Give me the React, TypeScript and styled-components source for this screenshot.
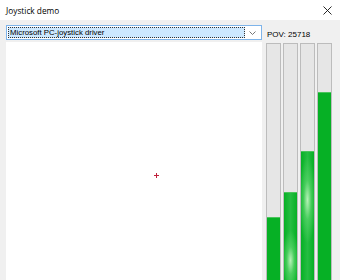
import React from "react";
import styled, { createGlobalStyle } from "styled-components";

const Global = createGlobalStyle`
  html, body { margin: 0; padding: 0; background: #f0f0f0; overflow: hidden; }
  body { font-family: "Liberation Sans", Arial, sans-serif; }
`;

const Window = styled.div`
  width: 340px;
  height: 280px;
  display: flex;
  flex-direction: column;
  background: #f0f0f0;
  overflow: hidden;
`;

const TitleBar = styled.div`
  height: 20px;
  flex: none;
  background: #ffffff;
  display: flex;
  align-items: center;
  justify-content: space-between;
  padding: 0 6px 0 6px;
  font-family: "Open Sans", "Liberation Sans", sans-serif;
  font-size: 8.3px;
  color: #000;
`;

const CloseButton = styled.div`
  width: 12px;
  height: 12px;
  display: flex;
  align-items: center;
  justify-content: center;
  margin-right: 1px;
`;

const Body = styled.div`
  flex: 1;
  display: flex;
  gap: 4px;
  padding: 5px 8px 0 6px;
  min-height: 0;
`;

const LeftColumn = styled.div`
  width: 256px;
  display: flex;
  flex-direction: column;
  gap: 2px;
`;

const Combo = styled.div`
  height: 15px;
  flex: none;
  box-sizing: border-box;
  border: 1px solid #7eb4ea;
  background: #ffffff;
  display: flex;
  align-items: stretch;
  padding: 1px;
`;

const ComboValue = styled.div`
  flex: 1;
  background: #cce8ff;
  outline: 1px dotted #333;
  outline-offset: -1px;
  display: flex;
  align-items: center;
  padding-left: 2px;
  font-size: 7.8px;
  color: #000;
  white-space: nowrap;
`;

const ComboArrow = styled.div`
  width: 15px;
  display: flex;
  align-items: center;
  justify-content: center;
`;

const Canvas = styled.div`
  flex: 1;
  background: #ffffff;
  position: relative;
`;

const Crosshair = styled.svg`
  position: absolute;
  left: 148px;
  top: 131px;
`;

const RightColumn = styled.div`
  flex: 1;
  display: flex;
  flex-direction: column;
`;

const PovLabel = styled.div`
  height: 18px;
  flex: none;
  display: flex;
  align-items: center;
  padding-left: 1px;
  font-size: 8px;
  color: #000;
`;

const Bars = styled.div`
  flex: 1;
  display: grid;
  grid-template-columns: repeat(4, 15px);
  column-gap: 2px;
`;

const Track = styled.div`
  position: relative;
  box-sizing: border-box;
  height: 245px;
  background: #e6e6e6;
  border: 1px solid #bcbcbc;
`;

const Fill = styled.div<{ $shineAt?: number }>`
  position: absolute;
  left: 0;
  right: 0;
  bottom: 0;
  background: ${(p) =>
    p.$shineAt !== undefined
      ? `radial-gradient(ellipse 65% 32% at 50% ${p.$shineAt}%, #b4f2b6 0%, rgba(96,216,112,0.65) 45%, rgba(6,176,37,0) 100%), linear-gradient(90deg, #06b025 0%, #25bd42 50%, #06b025 100%)`
      : "#06b025"};
  box-shadow: inset 0 1px 0 #4ac45c;
`;

const bars: { h: number; shineAt?: number }[] = [
  { h: 70 },
  { h: 95, shineAt: 72 },
  { h: 136, shineAt: 36 },
  { h: 195 },
];

export default function App() {
  return (
    <>
      <Global />
      <Window>
        <TitleBar>
          <span>Joystick demo</span>
          <CloseButton>
            <svg width="9" height="9" viewBox="0 0 9 9">
              <path d="M0.5 0.5 L8.5 8.5 M8.5 0.5 L0.5 8.5" stroke="#111" strokeWidth="0.9" />
            </svg>
          </CloseButton>
        </TitleBar>
        <Body>
          <LeftColumn>
            <Combo>
              <ComboValue>Microsoft PC-joystick driver</ComboValue>
              <ComboArrow>
                <svg width="7" height="4" viewBox="0 0 7 4">
                  <path d="M0.5 0.5 L3.5 3.5 L6.5 0.5" fill="none" stroke="#666" strokeWidth="0.9" />
                </svg>
              </ComboArrow>
            </Combo>
            <Canvas>
              <Crosshair width="5" height="5" viewBox="0 0 5 5">
                <path d="M2.5 0 V5 M0 2.5 H5" stroke="#c0203a" strokeWidth="1" />
              </Crosshair>
            </Canvas>
          </LeftColumn>
          <RightColumn>
            <PovLabel>POV: 25718</PovLabel>
            <Bars>
              {bars.map((b, i) => (
                <Track key={i}>
                  <Fill $shineAt={b.shineAt} style={{ height: b.h }} />
                </Track>
              ))}
            </Bars>
          </RightColumn>
        </Body>
      </Window>
    </>
  );
}
